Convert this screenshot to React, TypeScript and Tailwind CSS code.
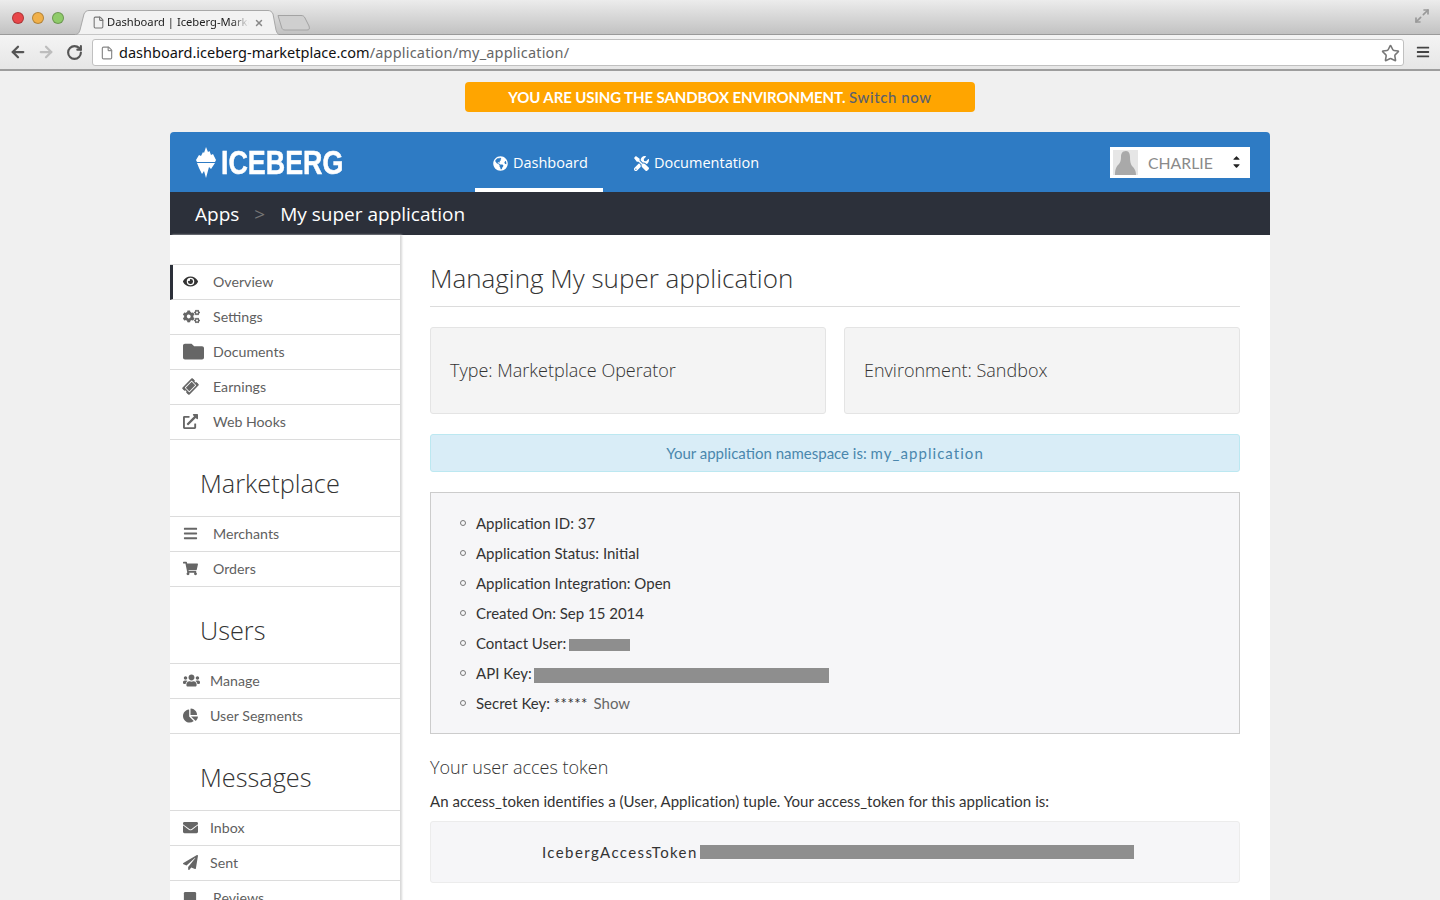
import { ArrowLeft, ArrowRight, RotateCw, File, X, Star, Maximize2 } from 'lucide-react'
import {
  FaEye,
  FaCogs,
  FaFolder,
  FaTicketAlt,
  FaExternalLinkAlt,
  FaBars,
  FaShoppingCart,
  FaUsers,
  FaChartPie,
  FaEnvelope,
  FaPaperPlane,
  FaGlobeAmericas,
  FaTools,
  FaSquare,
  FaSortUp,
  FaSortDown,
} from 'react-icons/fa'
import type { ReactNode } from 'react'

const LATO = "font-['Lato',sans-serif]"
const OPEN = "font-['Open_Sans',sans-serif]"

function Light({ color }: { color: string }) {
  return <span className={`h-3 w-3 rounded-full border border-black/25 ${color}`} />
}

function BrowserChrome() {
  return (
    <div className="h-[71px] font-['Noto_Sans',sans-serif]">
      <div className="relative flex h-[35px] items-end border-b border-[#9a9a9a] bg-gradient-to-b from-[#ececec] to-[#c2c2c2] pl-3">
        <div className="mb-[10px] flex gap-2">
          <Light color="bg-[#e8474a]" />
          <Light color="bg-[#f0b04a]" />
          <Light color="bg-[#8fcb6a]" />
        </div>
        <div className="relative -mb-px ml-[11px] flex h-[25px] w-[204px] items-center pl-[17px] text-[11.200px] text-[#222]">
          <svg width="204" height="25" viewBox="0 0 204 25" className="absolute left-0 top-0">
            <path
              d="M0 24.500 C3 24.500 4 23 5 20 L9 4 C10 1.500 12 .5 14 .5 H193 C195 .5 197 1.500 198 4 L201 20 C202 23 203 24.500 204 24.500"
              fill="#f2f2f2"
              stroke="#a8a8a8"
            />
          </svg>
          <File size={13} className="relative shrink-0 text-[#777]" />
          <span className="relative ml-[2px] w-[142px] overflow-hidden whitespace-nowrap [mask-image:linear-gradient(to_right,black_88%,transparent)]">
            Dashboard | Iceberg-Marke
          </span>
          <X size={10} strokeWidth={3.500} className="relative ml-[5px] text-[#888]" />
        </div>
        <svg width="34" height="17" viewBox="0 0 34 17" className="mb-[3px] ml-[-2px]">
          <path
            d="M1 1.500 H24 C26 1.500 27 2 28 4 L32 12 C33 15 32 16 30 16 H8 C6 16 5 15 4.500 13z"
            fill="#cfcfcf"
            stroke="#a3a3a3"
          />
        </svg>
        <div className="mb-[10px] ml-auto mr-[10px] text-[#999]">
          <Maximize2 size={16} strokeWidth={2.500} />
        </div>
      </div>
      <div className="flex h-[36px] items-center border-b-2 border-[#9d9d9d] bg-gradient-to-b from-[#f4f4f4] to-[#e6e6e6] pl-[9px]">
        <ArrowLeft size={18} strokeWidth={3} className="text-[#555]" />
        <ArrowRight size={18} strokeWidth={3} className="ml-[10px] text-[#bdbdbd]" />
        <RotateCw size={17} strokeWidth={3} className="ml-[11px] text-[#555]" />
        <div className="ml-[9px] flex h-[27px] w-[1312px] items-center rounded-[3px] border border-[#c0c0c0] bg-white pl-[7px] pr-[3px] pt-[2px] text-[14.500px]">
          <File size={14} className="text-[#888]" />
          <span className="ml-[5px] text-[#111]">dashboard.iceberg-marketplace.com</span>
          <span className="tracking-[0.2px] text-[#666]">/application/my_application/</span>
          <Star size={19} className="ml-auto text-[#777]" />
        </div>
        <FaBars size={14} className="ml-[12px] text-[#444]" />
      </div>
    </div>
  )
}

function SideItem({ icon, label, indent = 43 }: { icon: ReactNode; label: string; indent?: number }) {
  return (
    <div className="flex h-[35px] items-center border-b border-[#dcdcdc] pb-px text-[14.200px] text-[#5f5f5f]">
      <span className="ml-[13px] flex w-[13px] justify-start overflow-visible text-[#666] [&>svg]:shrink-0">{icon}</span>
      <span style={{ marginLeft: indent - 26 }}>{label}</span>
    </div>
  )
}

function SideTitle({ children }: { children: ReactNode }) {
  return (
    <div className={`flex h-[77px] items-center border-b border-[#dcdcdc] pl-[30px] pt-[11px] text-[25.300px] text-[#333] ${OPEN} font-light`}>
      {children}
    </div>
  )
}

function Sidebar() {
  return (
    <aside className={`relative z-10 w-[230px] shrink-0 bg-white pt-[29px] shadow-[2px_0_2px_#d8d8d8] ${LATO}`}>
      <div className="border-t border-[#dcdcdc]">
        <div className="flex h-[35px] items-center border-b border-l-[3px] border-b-[#dcdcdc] border-l-[#2c303a] pb-px text-[14.200px] text-[#5f5f5f]">
          <span className="ml-[10px] flex w-[13px] justify-start text-[#333] [&>svg]:shrink-0"><FaEye size={15} /></span>
          <span className="ml-[17px]">Overview</span>
        </div>
        <SideItem icon={<FaCogs size={17} />} label="Settings" />
        <SideItem icon={<FaFolder size={21} />} label="Documents" />
        <SideItem icon={<FaTicketAlt size={15} className="-rotate-45" />} label="Earnings" />
        <SideItem icon={<FaExternalLinkAlt size={15} />} label="Web Hooks" />
      </div>
      <SideTitle>Marketplace</SideTitle>
      <SideItem icon={<FaBars size={15} />} label="Merchants" />
      <SideItem icon={<FaShoppingCart size={15} />} label="Orders" />
      <SideTitle>Users</SideTitle>
      <SideItem icon={<FaUsers size={17} />} label="Manage" indent={40} />
      <SideItem icon={<FaChartPie size={15} />} label="User Segments" indent={40} />
      <SideTitle>Messages</SideTitle>
      <SideItem icon={<FaEnvelope size={15} />} label="Inbox" indent={40} />
      <SideItem icon={<FaPaperPlane size={15} />} label="Sent" indent={40} />
      <SideItem icon={<FaSquare size={14} />} label="Reviews" />
    </aside>
  )
}

function Redacted({ width, height = 12 }: { width: number; height?: number }) {
  return <span className="inline-block bg-[#8e8e8e] align-middle" style={{ width, height }} />
}

const DETAILS: ReactNode[] = [
  'Application ID: 37',
  'Application Status: Initial',
  'Application Integration: Open',
  'Created On: Sep 15 2014',
  <>Contact User:<span className="ml-[3px]"><Redacted width={61} /></span></>,
  <>API Key:<span className="ml-[2px]"><Redacted width={295} height={15} /></span></>,
  <>Secret Key: <span className="tracking-[0.4px]">*****</span> <span className="ml-[2px] text-[#666]">Show</span></>,
]

function Content() {
  return (
    <main className={`min-w-0 flex-1 bg-white px-[30px] pt-[26px] ${LATO}`}>
      <h1 className={`h-[46px] border-b border-[#dcdcdc] text-[26px] font-light leading-[34px] text-[#333] ${OPEN}`}>
        Managing My super application
      </h1>
      <div className="mt-[20px] grid grid-cols-2 gap-[18px]">
        {['Type: Marketplace Operator', 'Environment: Sandbox'].map((t) => (
          <div key={t} className={`flex h-[87px] items-center rounded-[3px] border border-[#e4e4e4] bg-[#f4f4f4] pl-[19px] text-[18px] font-light text-[#333] ${OPEN}`}>
            {t}
          </div>
        ))}
      </div>
      <div className="mt-[20px] flex h-[38px] items-center justify-center rounded-[3px] border border-[#bce8f1] bg-[#d9edf7] pr-[20px] text-[15px] text-[#4a87ad]">
        Your application namespace is:&nbsp;<span className="tracking-[1.05px]">my_application</span>
      </div>
      <div className="mt-[20px] h-[242px] border border-[#cccccc] bg-[#f6f6f8] pl-[29px] pt-[15px] text-[15px] text-[#333]">
        <ul>
          {DETAILS.map((d, i) => (
            <li key={i} className="flex h-[30px] items-center gap-[10px] leading-[30px]">
              <span className="h-[6px] w-[6px] shrink-0 rounded-full border border-[#777]" />
              <span>{d}</span>
            </li>
          ))}
        </ul>
      </div>
      <h2 className={`mt-[20px] text-[18px] font-light leading-[26px] text-[#333] ${OPEN}`}>Your user acces token</h2>
      <p className="mt-[10px] text-[15px] leading-[22px] tracking-[0.04px] text-[#333]">
        An access_token identifies a (User, Application) tuple. Your access_token for this application is:
      </p>
      <div className="mt-[9px] flex h-[62px] items-center gap-[2px] rounded-[3px] border border-[#ececec] bg-[#f6f6f8] pl-[111px] text-[15px] tracking-[1.400px] text-[#333]">
        <span>IcebergAccessToken</span>
        <Redacted width={434} height={14} />
      </div>
    </main>
  )
}

export default function App() {
  return (
    <div className="h-screen overflow-hidden bg-[#f0f0f0]">
      <BrowserChrome />
      <div className="mt-[11px] flex justify-center">
        <div className={`flex h-[30px] w-[510px] items-center justify-center rounded-[4px] bg-[#ffa500] text-[15px] font-bold tracking-[-0.1px] text-white ${LATO}`}>
          YOU ARE USING THE SANDBOX ENVIRONMENT.&nbsp;<span className="font-medium tracking-[0.6px] text-[#5a5f6e]">Switch now</span>
        </div>
      </div>
      <div className="mx-auto mt-[20px] w-[1100px]">
        <header className="flex h-[60px] items-center rounded-t-[4px] bg-[#2e7bc4] pl-[26px] pr-[20px]">
          <svg width="20" height="31" viewBox="0 0 20 31" className="fill-white">
            <path d="M0 13 L3 8 L5 9 L7 5 L8 6 L10 0 L12 5 L13.500 4 L15 8 L17 7 L20 13 L19 15 L1 15z" />
            <path d="M1 16 H19 L15 22 L13 20 L10 31 L8 24 L6 27 L3 21z" />
          </svg>
          <span className="ml-[5px] inline-block origin-left scale-x-[0.79] font-['Liberation_Sans',sans-serif] text-[34px] font-bold leading-none text-white [-webkit-text-stroke:0.5px_white]">
            ICEBERG
          </span>
          <nav className={`ml-[99px] flex h-full text-[14.500px] text-white ${OPEN}`}>
            <div className="flex h-full w-[128px] items-center gap-[5px] border-b-4 border-white pl-[18px] pt-[6px]">
              <FaGlobeAmericas size={15} /> Dashboard
            </div>
            <div className="ml-[31px] flex items-center gap-[5px] pt-[2px]">
              <FaTools size={15} /> Documentation
            </div>
          </nav>
          <div className={`ml-auto flex h-[31px] w-[140px] items-center bg-white pl-[3px] pr-[8px] ${LATO}`}>
            <svg width="25" height="25" viewBox="0 0 25 25">
              <rect width="25" height="25" fill="#e6e6e6" />
              <path
                d="M13 1 C9 1 8 4 8 7 C8 10 7.500 12 6 14 C4 16 2 18 2 25 H23 C23 20 21 18 19 16 C17.500 14 17 11 17 7 C17 4 16 1 13 1z"
                fill="#a9a9a9"
              />
            </svg>
            <span className="ml-[10px] pt-px text-[15.800px] text-[#8a8a8a]">CHARLIE</span>
            <span className="ml-auto flex flex-col text-[#222]">
              <FaSortUp size={11} className="-mb-[8px]" />
              <FaSortDown size={11} />
            </span>
          </div>
        </header>
        <div className={`flex h-[43px] items-center bg-[#2c303a] pl-[25px] pt-[2px] text-[19px] text-white ${OPEN}`}>
          Apps
          <span className="mx-[15px] text-[#777]">&gt;</span>
          My super application
        </div>
        <div className="flex h-[700px]">
          <Sidebar />
          <Content />
        </div>
      </div>
    </div>
  )
}
